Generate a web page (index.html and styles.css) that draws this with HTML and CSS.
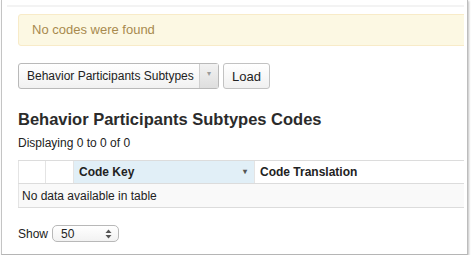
FILE: index.html
```html
<!DOCTYPE html>
<html lang="en">
<head>
    <meta charset="UTF-8">
    <title>Codes</title>
    <link rel="stylesheet" href="styles.css">
</head>
<body>
    <div class="window">
        <div class="content">
            <div class="top-band"></div>

            <div class="alert">No codes were found</div>

            <div class="picker">
                <div class="select-box">
                    <span class="select-text">Behavior Participants Subtypes</span>
                    <span class="select-arrow">&#9662;</span>
                </div>
                <button class="load-btn">Load</button>
            </div>

            <h2 class="title">Behavior Participants Subtypes Codes</h2>
            <div class="count">Displaying 0 to 0 of 0</div>

            <table class="codes-table">
                <colgroup>
                    <col class="col-a">
                    <col class="col-b">
                    <col class="col-key">
                    <col>
                </colgroup>
                <thead>
                    <tr>
                        <th></th>
                        <th></th>
                        <th class="sorted">Code Key <span class="sort-caret">&#9662;</span></th>
                        <th>Code Translation</th>
                    </tr>
                </thead>
                <tbody>
                    <tr class="empty-row">
                        <td colspan="4">No data available in table</td>
                    </tr>
                </tbody>
            </table>

            <div class="show-row">
                <span>Show</span>
                <div class="show-select">
                    <span>50</span>
                    <svg class="updown" width="7" height="10" viewBox="0 0 7 10">
                        <path d="M3.5 0.5 L6.5 4 H0.5 Z" fill="#555"/>
                        <path d="M3.5 9.5 L6.5 6 H0.5 Z" fill="#555"/>
                    </svg>
                </div>
            </div>
        </div>
    </div>
</body>
</html>
```
FILE: styles.css
```css
body {
    margin: 0;
    background-color: #ffffff;
    font-family: "Liberation Sans", Arial, Helvetica, sans-serif;
    color: #333;
}

.window {
    width: 467px;
    height: 255px;
    margin-left: 1px;
    border-left: 1px solid #c4c4c4;
    border-right: 1px solid #bdbdbd;
    border-bottom: 1px solid #b5b5b5;
    box-shadow: 1px 1px 2px rgba(0, 0, 0, 0.25);
    background-color: white;
    box-sizing: border-box;
}

.content {
    width: 462px;
    height: 254px;
    overflow: hidden;
    padding-left: 16px;
    box-sizing: border-box;
}

.top-band {
    height: 2px;
    margin: 5px 0 0 -11px;
    width: 470px;
    background-color: #f3f3f3;
}

.alert {
    margin-top: 7px;
    width: 480px;
    height: 32px;
    box-sizing: border-box;
    padding: 0 13px;
    line-height: 30px;
    font-size: 13px;
    color: #a88a4e;
    background-color: #fcf8e3;
    border: 1px solid #f8ebc8;
    border-radius: 3px;
}

.picker {
    display: flex;
    gap: 4px;
    margin-top: 17px;
}

.select-box {
    display: flex;
    width: 201px;
    height: 26px;
    box-sizing: border-box;
    border: 1px solid #b9b9b9;
    border-radius: 3px;
    background: linear-gradient(#ffffff, #f1f1f1);
    font-size: 12px;
    color: #222;
    white-space: nowrap;
}

.select-text {
    flex: 1;
    padding-left: 8px;
    line-height: 24px;
}

.select-arrow {
    width: 18px;
    border-left: 1px solid #cfcfcf;
    background: linear-gradient(#f2f2f2, #dedede);
    color: #9a9a9a;
    font-size: 8px;
    text-align: center;
    line-height: 20px;
}

.load-btn {
    width: 47px;
    height: 26px;
    padding: 0;
    font-family: inherit;
    font-size: 13px;
    color: #222;
    background: linear-gradient(#ffffff, #f0f0f0);
    border: 1px solid #c2c2c2;
    border-radius: 3px;
}

.title {
    margin: 19px 0 0;
    font-size: 16.5px;
    line-height: 22px;
    font-weight: bold;
    color: #2b2b2b;
}

.count {
    margin-top: 5px;
    font-size: 12px;
    line-height: 16px;
    color: #222;
}

.codes-table {
    margin-top: 9px;
    width: 470px;
    border-collapse: collapse;
    font-size: 12px;
    table-layout: fixed;
}

.col-a {
    width: 27px;
}

.col-b {
    width: 28px;
}

.col-key {
    width: 181px;
}

.codes-table th {
    height: 22px;
    padding: 0 0 0 5px;
    text-align: left;
    font-weight: bold;
    color: #222;
    border-top: 1px solid #dcdcdc;
    border-bottom: 1px solid #dcdcdc;
    border-left: 1px solid #e4e4e4;
}

.codes-table th.sorted {
    background-color: #e1eff7;
    position: relative;
}

.sort-caret {
    position: absolute;
    right: 7px;
    top: 6px;
    font-size: 8px;
    color: #555;
}

.empty-row td {
    height: 23px;
    padding: 0 3px;
    background-color: #f9f9f9;
    border-left: 1px solid #e4e4e4;
    border-bottom: 1px solid #dcdcdc;
    color: #222;
}

.show-row {
    display: flex;
    align-items: center;
    gap: 4px;
    margin-top: 17px;
    font-size: 12px;
    color: #222;
}

.show-select {
    display: flex;
    align-items: center;
    justify-content: space-between;
    width: 67px;
    height: 17px;
    box-sizing: border-box;
    padding: 0 6px 0 8px;
    border: 1px solid #b8b8b8;
    border-radius: 5px;
    background: linear-gradient(#ffffff, #f2f2f2);
    font-size: 12px;
}
```
